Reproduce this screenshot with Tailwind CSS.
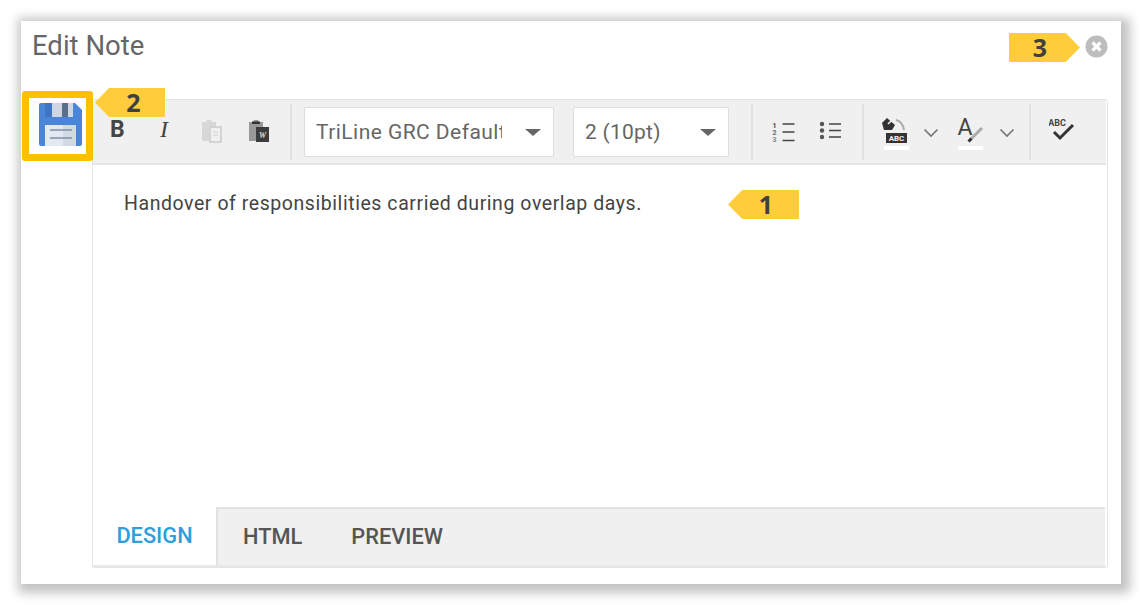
<!DOCTYPE html>
<html>
<head>
<meta charset="utf-8">
<script src="https://cdn.jsdelivr.net/npm/@tailwindcss/browser@4"></script>
</head>
<body class="bg-white w-[1142px] h-[605px] overflow-hidden font-['Roboto',sans-serif]">
<div class="pt-[21px] pl-[21px]">
  <div class="relative w-[1100px] h-[563px] bg-white shadow-[3px_3px_10px_6px_rgba(0,0,0,0.24)] flex flex-col">
    <h1 class="pl-[11px] pt-[7px] h-[78px] text-[27.500px] leading-[36px] text-[#666] font-normal">Edit Note</h1>

    <div class="ml-[71px] w-[1016px] h-[469px] border border-[#e4e4e4] rounded-[3px] flex flex-col">
      <div class="h-[65px] bg-[#f0f0f0] border-b-2 border-[#e6e6e6] flex items-center text-[#444] mr-[1px]">
        <div class="w-[199px] h-[56px] border-r-2 border-[#e2e2e2] flex items-center">
          <span class="w-[50px] pl-[17px] text-[23px] font-bold text-[#444] leading-none mt-[-5px]">B</span>
          <span class="w-[46px] pl-[17px] text-[24px] italic text-[#444] font-['Liberation_Serif',serif] leading-none mt-[-5px]">I</span>
          <svg class="w-[24px] h-[24px] ml-[11px] mt-[-1px]" viewBox="0 0 24 24"><path d="M2 3h4l1-2h4l1 2h4v6H9v13H2z" fill="#d8d8d8"/><rect x="10" y="8" width="11" height="15" fill="#f0f0f0" stroke="#cdcdcd" stroke-width="1.600"/><path d="M13 13h5M13 16h5" stroke="#cdcdcd" stroke-width="1.200"/></svg>
          <svg class="w-[24px] h-[24px] ml-[23px] mt-[-1px]" viewBox="0 0 24 24"><path d="M2 3h4l1-2h4l1 2h4v6H9v13H2z" fill="#999"/><path d="M5 2.500h8V5H5z" fill="#333"/><rect x="9" y="8" width="13" height="15" fill="#3c3c3c"/><text x="15.500" y="19" text-anchor="middle" font-size="8" font-weight="700" font-style="italic" fill="#ddd" font-family="Liberation Serif">W</text></svg>
        </div>
        <div class="ml-[12px] w-[250px] h-[50px] bg-white border border-[#dedede] rounded-[2px] flex items-center pl-[11px] pt-[2px] text-[21px] tracking-[0.45px] text-[#666]">
          <span class="w-[186px] shrink-0 overflow-hidden whitespace-nowrap">TriLine GRC Default</span>
          <span class="ml-[23px] w-0 h-0 border-x-[8px] border-x-transparent border-t-[7px] border-t-[#666]"></span>
        </div>
        <div class="ml-[19px] w-[156px] h-[50px] bg-white border border-[#dedede] rounded-[2px] flex items-center pl-[11px] pt-[2px] text-[21px] tracking-[0.25px] text-[#666]">
          <span class="w-[115px] shrink-0 whitespace-nowrap">2 (10pt)</span>
          <span class="w-0 h-0 border-x-[8px] border-x-transparent border-t-[7px] border-t-[#666]"></span>
        </div>
        <div class="ml-[22px] w-[113px] h-[56px] border-x-2 border-[#e2e2e2] flex items-center">
          <svg class="ml-[18px] w-[26px] h-[24px] shrink-0" viewBox="0 0 26 24" fill="none"><path d="M11.500 4h12M11.500 12h12M11.500 20.500h12" stroke="#444" stroke-width="1.700"/><text x="3.500" y="8" text-anchor="middle" font-size="7" font-weight="700" fill="#444" font-family="Roboto">1</text><text x="3.500" y="15" text-anchor="middle" font-size="7" font-weight="700" fill="#666" font-family="Roboto">2</text><text x="3.500" y="22" text-anchor="middle" font-size="7" font-weight="700" fill="#888" font-family="Roboto">3</text></svg>
          <svg class="ml-[22px] w-[24px] h-[24px] shrink-0 mt-[-2px]" viewBox="0 0 24 24" fill="none"><path d="M10 5h12M10 11.500h12M10 18h12" stroke="#444" stroke-width="1.700"/><circle cx="3" cy="5" r="2.200" fill="#555"/><circle cx="3" cy="11.500" r="2.200" fill="#555"/><circle cx="3" cy="18" r="2.200" fill="#555"/></svg>
        </div>
        <div class="w-[167px] h-[56px] border-r-2 border-[#e2e2e2] flex items-center">
          <svg class="ml-[17px] mt-[6px] w-[28px] h-[36px] shrink-0" viewBox="0 0 28 36" fill="none"><path d="M1 6l5-5 8 7-3 5H3z" fill="#333"/><path d="M7 7l5-5" stroke="#f0f0f0" stroke-width="1.600"/><path d="M15 3c5 1 7 4 8 10" stroke="#aaa" stroke-width="2"/><rect x="5" y="16" width="21" height="10" fill="#333"/><text x="15.500" y="24" text-anchor="middle" font-size="8" font-weight="700" fill="#eee" font-family="Roboto">ABC</text><rect x="3" y="29" width="25" height="4" fill="#fff"/></svg>
          <svg class="ml-[14px] w-[16px] h-[10px] mt-[3px] shrink-0" viewBox="0 0 16 10" fill="none"><path d="M1.500 1.500L8 8l6.500-6.500" stroke="#777" stroke-width="1.700"/></svg>
          <svg class="ml-[18px] mt-[6px] w-[28px] h-[36px] shrink-0" viewBox="0 0 28 36" fill="none"><text x="8" y="18" text-anchor="middle" font-size="23" fill="#444" font-family="Roboto">A</text><path d="M13 23L25 11" stroke="#aaa" stroke-width="3"/><path d="M11.500 24.500l3-3" stroke="#333" stroke-width="3"/><rect x="1" y="29" width="25" height="4" fill="#fff"/></svg>
          <svg class="ml-[14px] w-[16px] h-[10px] mt-[3px] shrink-0" viewBox="0 0 16 10" fill="none"><path d="M1.500 1.500L8 8l6.500-6.500" stroke="#777" stroke-width="1.700"/></svg>
        </div>
        <svg class="ml-[18px] w-[26px] h-[24px] mt-[-3px] shrink-0" viewBox="0 0 26 24" fill="none"><text x="8" y="8" text-anchor="middle" font-size="9" font-weight="700" fill="#444" font-family="Roboto">ABC</text><path d="M5 14l6 6L24 7" stroke="#333" stroke-width="3"/></svg>
      </div>

      <div class="flex-1 pl-[31px] pt-[26px] text-[19.500px] leading-[26px] text-[#444] tracking-[0.56px]">Handover of responsibilities carried during overlap days.</div>

      <div class="h-[60px] flex mr-[2px] border-b-2 border-[#e8e8e8]">
        <div class="w-[123px] flex items-center justify-center text-[21.800px] font-medium text-[#2d9fdc] pt-[1px]">DESIGN</div>
        <div class="flex-1 bg-[#f0f0f0] border-t-2 border-l-2 border-[#e2e2e2] flex items-center text-[21.800px] font-medium text-[#555]">
          <span class="ml-[25px]">HTML</span>
          <span class="ml-[49px]">PREVIEW</span>
        </div>
      </div>
    </div>

    <!-- overlays: annotation callouts and highlight -->
    <div class="absolute left-[1px] top-[70px] w-[71px] h-[70px] border-[7px] border-[#ffc000] rounded-[3px] bg-white flex items-start justify-start pl-[10px] pt-[5px]">
      <svg class="w-[43px] h-[43px] shrink-0" viewBox="0 0 43 43"><path d="M2 0h34l7 7v34a2 2 0 0 1-2 2H2a2 2 0 0 1-2-2V2a2 2 0 0 1 2-2z" fill="#4a86d8"/><rect x="6" y="0" width="28" height="14" fill="#3f76c4"/><rect x="13" y="0" width="21" height="14" fill="#cfd6e1"/><rect x="23" y="0" width="6" height="14" fill="#5a6e8c"/><rect x="6" y="22" width="31" height="21" fill="#e4e9f1"/><rect x="24" y="22" width="13" height="21" fill="#d3d9e3"/><path d="M11 27h22M11 35h22" stroke="#7f8fa5" stroke-width="1.600"/></svg>
    </div>
    <div class="absolute left-[74px] top-[67px] w-[70px] h-[29px] bg-[#ffcd3c] [clip-path:polygon(20%_0,100%_0,100%_100%,20%_100%,0_50%)] flex items-center justify-center pl-[7px] text-[25px] font-bold font-['Open_Sans',sans-serif] text-[#404040] leading-none">2</div>
    <div class="absolute left-[707px] top-[169px] w-[71px] h-[29px] bg-[#ffcd3c] [clip-path:polygon(20%_0,100%_0,100%_100%,20%_100%,0_50%)] flex items-center justify-center pl-[5px] text-[25px] font-bold font-['Open_Sans',sans-serif] text-[#404040] leading-none">1</div>
    <div class="absolute left-[988px] top-[12px] w-[71px] h-[29px] bg-[#ffcd3c] [clip-path:polygon(0_0,80%_0,100%_50%,80%_100%,0_100%)] flex items-center justify-center pr-[9px] text-[25px] font-bold font-['Open_Sans',sans-serif] text-[#404040] leading-none">3</div>
    <svg class="absolute left-[1064px] top-[14px] w-[23px] h-[23px]" viewBox="0 0 23 23"><circle cx="11.500" cy="11.500" r="11" fill="#bdbdbd"/><path d="M7.500 7.500l8 8M15.500 7.500l-8 8" stroke="#fff" stroke-width="3.200"/></svg>
  </div>
</div>
</body>
</html>
